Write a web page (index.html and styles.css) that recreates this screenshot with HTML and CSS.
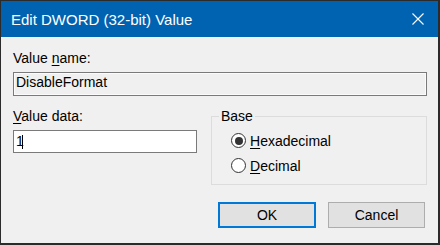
FILE: index.html
```html
<!DOCTYPE html>
<html>
<head>
<meta charset="utf-8">
<link rel="stylesheet" href="styles.css">
</head>
<body>
<div class="window">
  <div class="titlebar">
    <span class="title">Edit DWORD (32-bit) Value</span>
    <svg class="close" width="12" height="12" viewBox="0 0 12 12"><path d="M0.5 0.5 L11.5 11.5 M11.5 0.5 L0.5 11.5" stroke="#fff" stroke-width="1.1" fill="none"/></svg>
  </div>
  <div class="content">
    <div class="label">Value <u>n</u>ame:</div>
    <div class="textbox readonly">DisableFormat</div>
    <div class="row">
      <div class="datacol">
        <div class="label"><u>V</u>alue data:</div>
        <div class="textbox edit">1<span class="caret"></span></div>
      </div>
      <fieldset class="group">
        <legend>Base</legend>
        <div class="radio"><span class="dot checked"></span><span><u>H</u>exadecimal</span></div>
        <div class="radio"><span class="dot"></span><span><u>D</u>ecimal</span></div>
      </fieldset>
    </div>
    <div class="buttons">
      <div class="btn default">OK</div>
      <div class="btn cancel">Cancel</div>
    </div>
  </div>
</div>
</body>
</html>
```
FILE: styles.css
```css
html, body {
  margin: 0;
  padding: 0;
}
body {
  width: 440px;
  height: 245px;
  overflow: hidden;
  font-family: "Liberation Sans", Arial, sans-serif;
  font-size: 14px;
  color: #000;
}
.window {
  box-sizing: border-box;
  width: 440px;
  height: 245px;
  border-left: 1px solid #2b2b2b;
  border-top: 1px solid #2b2b2b;
  border-right: 2px solid #2b2b2b;
  border-bottom: 2px solid #2b2b2b;
  background: #f0f0f0;
  display: flex;
  flex-direction: column;
}
.titlebar {
  height: 36px;
  background: #0063b1;
  display: flex;
  align-items: center;
  justify-content: space-between;
  padding: 0 14px 0 10px;
}
.title {
  color: #fff;
  font-size: 15px;
}
.close {
  display: block;
}
.content {
  padding: 13px 11px 0 12px;
}
.label {
  line-height: 16px;
  height: 16px;
}
u {
  text-decoration: underline;
  text-underline-offset: 2px;
}
.textbox {
  box-sizing: border-box;
  border: 1px solid #7a7a7a;
  white-space: nowrap;
}
.readonly {
  margin-top: 6px;
  height: 24px;
  line-height: 19px;
  padding-left: 2px;
  background: #f0f0f0;
  box-shadow: inset 0 0 0 1px #fbfbfb;
}
.row {
  display: flex;
  margin-top: 12px;
  gap: 14px;
}
.datacol {
  width: 184px;
}
.edit {
  margin-top: 6px;
  height: 23px;
  line-height: 21px;
  padding-left: 2px;
  background: #fff;
  display: flex;
  align-items: center;
}
.caret {
  display: inline-block;
  width: 1px;
  height: 14px;
  background: #000;
  margin-left: -2px;
}
.group {
  box-sizing: border-box;
  width: 216px;
  margin: 0;
  padding: 4px 0 6px 19px;
  border: 1px solid #dcdcdc;
  min-width: 0;
}
.group legend {
  margin-left: -12px;
  padding: 0 2px;
  line-height: 16px;
}
.radio {
  height: 25px;
  display: flex;
  align-items: center;
}
.dot {
  box-sizing: border-box;
  width: 15px;
  height: 15px;
  border: 1px solid #333;
  border-radius: 50%;
  background: #fff;
  margin-right: 4px;
  display: flex;
  align-items: center;
  justify-content: center;
}
.dot.checked::after {
  content: "";
  width: 8px;
  height: 8px;
  border-radius: 50%;
  background: #333;
}
.buttons {
  display: flex;
  justify-content: flex-end;
  gap: 12px;
  margin-top: 17px;
  margin-right: 2px;
}
.btn {
  box-sizing: border-box;
  height: 26px;
  background: #e1e1e1;
  display: flex;
  align-items: center;
  justify-content: center;
}
.default {
  width: 98px;
  border: 2px solid #0078d7;
}
.cancel {
  width: 97px;
  border: 1px solid #adadad;
}
```
